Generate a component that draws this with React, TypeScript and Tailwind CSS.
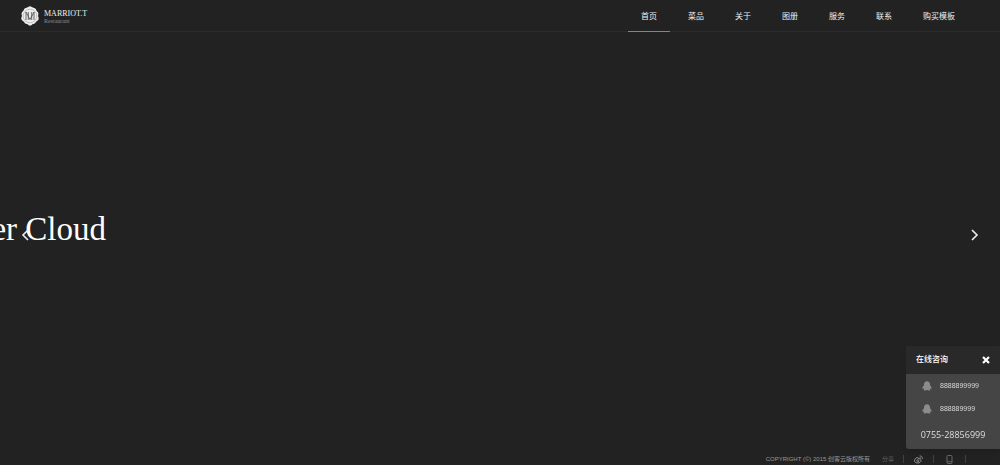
import React from 'react';

const navItems = ['首页', '菜品', '关于', '图册', '服务', '联系', '购买模板'];
const accounts = ['8888899999', '888889999'];

const Logo: React.FC = () => (
  <a href="#" className="flex items-center gap-1 text-[#f0f0f0]">
    <svg className="h-5 w-5" viewBox="0 0 20 20" fill="none">
      <path
        d="M10 .3C11.500.3 12 1.500 13.300 1.700c1.500.1 2.600.9 2.900 2.300.3 1.200 1.900 1.700 2.200 3.200.2 1.100-.4 1.800-.3 2.800.1 1.100.9 1.900.5 3.200-.4 1.400-1.800 1.500-2.500 2.600-.6 1.100-1.400 2-2.900 2.100-1.300.1-1.700 1.700-3.200 1.700s-1.900-1.600-3.200-1.700c-1.500-.1-2.300-1-2.900-2.100-.7-1.100-2.100-1.200-2.500-2.600-.4-1.300.4-2.100.5-3.200.1-1-.5-1.700-.3-2.800.3-1.500 1.900-2 2.200-3.200.3-1.400 1.400-2.200 2.900-2.300C8 1.500 8.500.3 10 .3z"
        fill="#ececec"
      />
      <circle cx="10" cy="10" r="6.800" stroke="#a5a5a5" strokeWidth=".6" />
      <path d="M6 6v8M14 6v8M6 6l4 7.500L14 6M8.300 6v8M11.700 6v8" stroke="#4a4a4a" strokeWidth=".8" />
    </svg>
    <span className="flex flex-col pt-0.5 font-['Liberation_Serif',serif]">
      <span className="text-[8px] leading-[8px]">MARRIOT.T</span>
      <span className="text-[6px] leading-[6px] text-[#8a8a8a]">Restaurant</span>
    </span>
  </a>
);

const Header: React.FC = () => (
  <header className="flex h-8 items-stretch justify-between border-b border-[#2c2c2c] pl-5 pr-8">
    <Logo />
    <nav className="-mb-px flex gap-[5px]">
      {navItems.map((item, i) => (
        <a
          key={item}
          href="#"
          className={`flex items-center border-b px-[13px] pt-0.5 text-[8px] leading-3 text-[#f0f0f0] ${
            i === 0 ? 'border-[#858585]' : 'border-transparent'
          }`}
        >
          {item}
        </a>
      ))}
    </nav>
  </header>
);

const Slider: React.FC = () => (
  <main className="relative flex flex-1 items-center overflow-hidden pb-7">
    <h1 className="flex w-[106px] justify-end whitespace-nowrap font-['Liberation_Serif',serif] text-[33px] leading-10 text-white">
      er Cloud
    </h1>
    <div className="absolute inset-x-5 bottom-4 top-0 flex items-center justify-between text-[#eee]">
      <button aria-label="Previous">
        <svg className="h-3 w-3" viewBox="0 0 12 12" fill="none" stroke="currentColor" strokeWidth="1.6">
          <path d="M8 1L3 6l5 5" />
        </svg>
      </button>
      <button aria-label="Next">
        <svg className="h-3 w-3" viewBox="0 0 12 12" fill="none" stroke="currentColor" strokeWidth="1.6">
          <path d="M4 1l5 5-5 5" />
        </svg>
      </button>
    </div>
  </main>
);

const PenguinIcon: React.FC = () => (
  <svg className="h-[10px] w-[10px]" viewBox="0 0 10 10" fill="#8c8c8c">
    <path d="M5 .3C3.200.3 2 1.600 2 3.400v.8C1.100 5.200.3 6.300.4 7.400c.1.500.6.300 1-.2.200.6.400.9.700 1.200-.8.400-.6 1.200.8 1.200.9 0 1.600-.2 2.100-.5.500.3 1.200.5 2.100.5 1.400 0 1.600-.8.800-1.200.3-.3.500-.6.700-1.200.4.500.9.700 1 .2.100-1.100-.7-2.200-1.600-3.200v-.8C8 1.600 6.800.3 5 .3z" />
  </svg>
);

const ChatPanel: React.FC = () => (
  <aside className="fixed bottom-4 right-0 w-[94px] overflow-hidden rounded-l-[3px] bg-[#454545] shadow-md">
    <div className="flex h-7 items-center justify-between bg-[#292929] px-[10px] text-white">
      <h2 className="text-[8px] font-medium leading-3">在线咨询</h2>
      <button aria-label="Close">
        <svg className="h-2 w-2" viewBox="0 0 8 8" stroke="currentColor" strokeWidth="2.2">
          <path d="M1 1l6 6M7 1L1 7" />
        </svg>
      </button>
    </div>
    <ul className="flex flex-col">
      {accounts.map((account) => (
        <li key={account}>
          <a href="#" className="flex h-[23px] items-center gap-2 pl-4 text-[7px] leading-3 text-[#d8d8d8]">
            <PenguinIcon />
            {account}
          </a>
        </li>
      ))}
    </ul>
    <p className="flex h-[29px] items-center justify-center font-['Open_Sans','Noto_Sans',sans-serif] text-[9px] leading-3 text-[#dedede]">
      0755-28856999
    </p>
  </aside>
);

const Footer: React.FC = () => (
  <footer className="flex h-3 items-center justify-end pr-[34px] text-[6px] leading-3 text-[#9a9a9a]">
    <p>COPYRIGHT (©) 2015 创客云版权所有</p>
    <a href="#" className="ml-3 text-[#666]">
      分享
    </a>
    <span className="ml-[9px] h-2 w-px bg-[#414141]" />
    <a href="#" aria-label="微博" className="ml-[10px]">
      <svg className="h-[9px] w-[9px]" viewBox="0 0 18 18" fill="none" stroke="#959595">
        <path d="M7 5C4 5 1 8.500 1 11.500S4 16 7.500 16s6.500-2 6.500-4.500c0-1.500-1-2.200-2.200-2.500.4-2-1-2.800-3.300-1.800C8.700 5.700 8.200 5 7 5z" strokeWidth="2" />
        <circle cx="7.500" cy="11.500" r="2" strokeWidth="1.800" />
        <path d="M11 2c4-.6 6.500 2 5.700 6M11.500 5c1.800-.1 2.600.9 2.300 2.500" strokeWidth="1.600" />
      </svg>
    </a>
    <span className="ml-[10px] h-2 w-px bg-[#414141]" />
    <a href="#" aria-label="手机" className="ml-3">
      <svg className="h-[9px] w-[7px]" viewBox="0 0 7 9" fill="none" stroke="#666">
        <rect x="1" y=".5" width="5" height="8" rx=".8" />
        <path d="M1 6.700h5" />
      </svg>
    </a>
    <span className="ml-3 h-2 w-px bg-[#414141]" />
  </footer>
);

export default function App() {
  return (
    <div className="flex min-h-screen flex-col bg-[#222222] font-['Liberation_Sans','Noto_Sans_CJK_SC',sans-serif]">
      <Header />
      <Slider />
      <Footer />
      <ChatPanel />
    </div>
  );
}
